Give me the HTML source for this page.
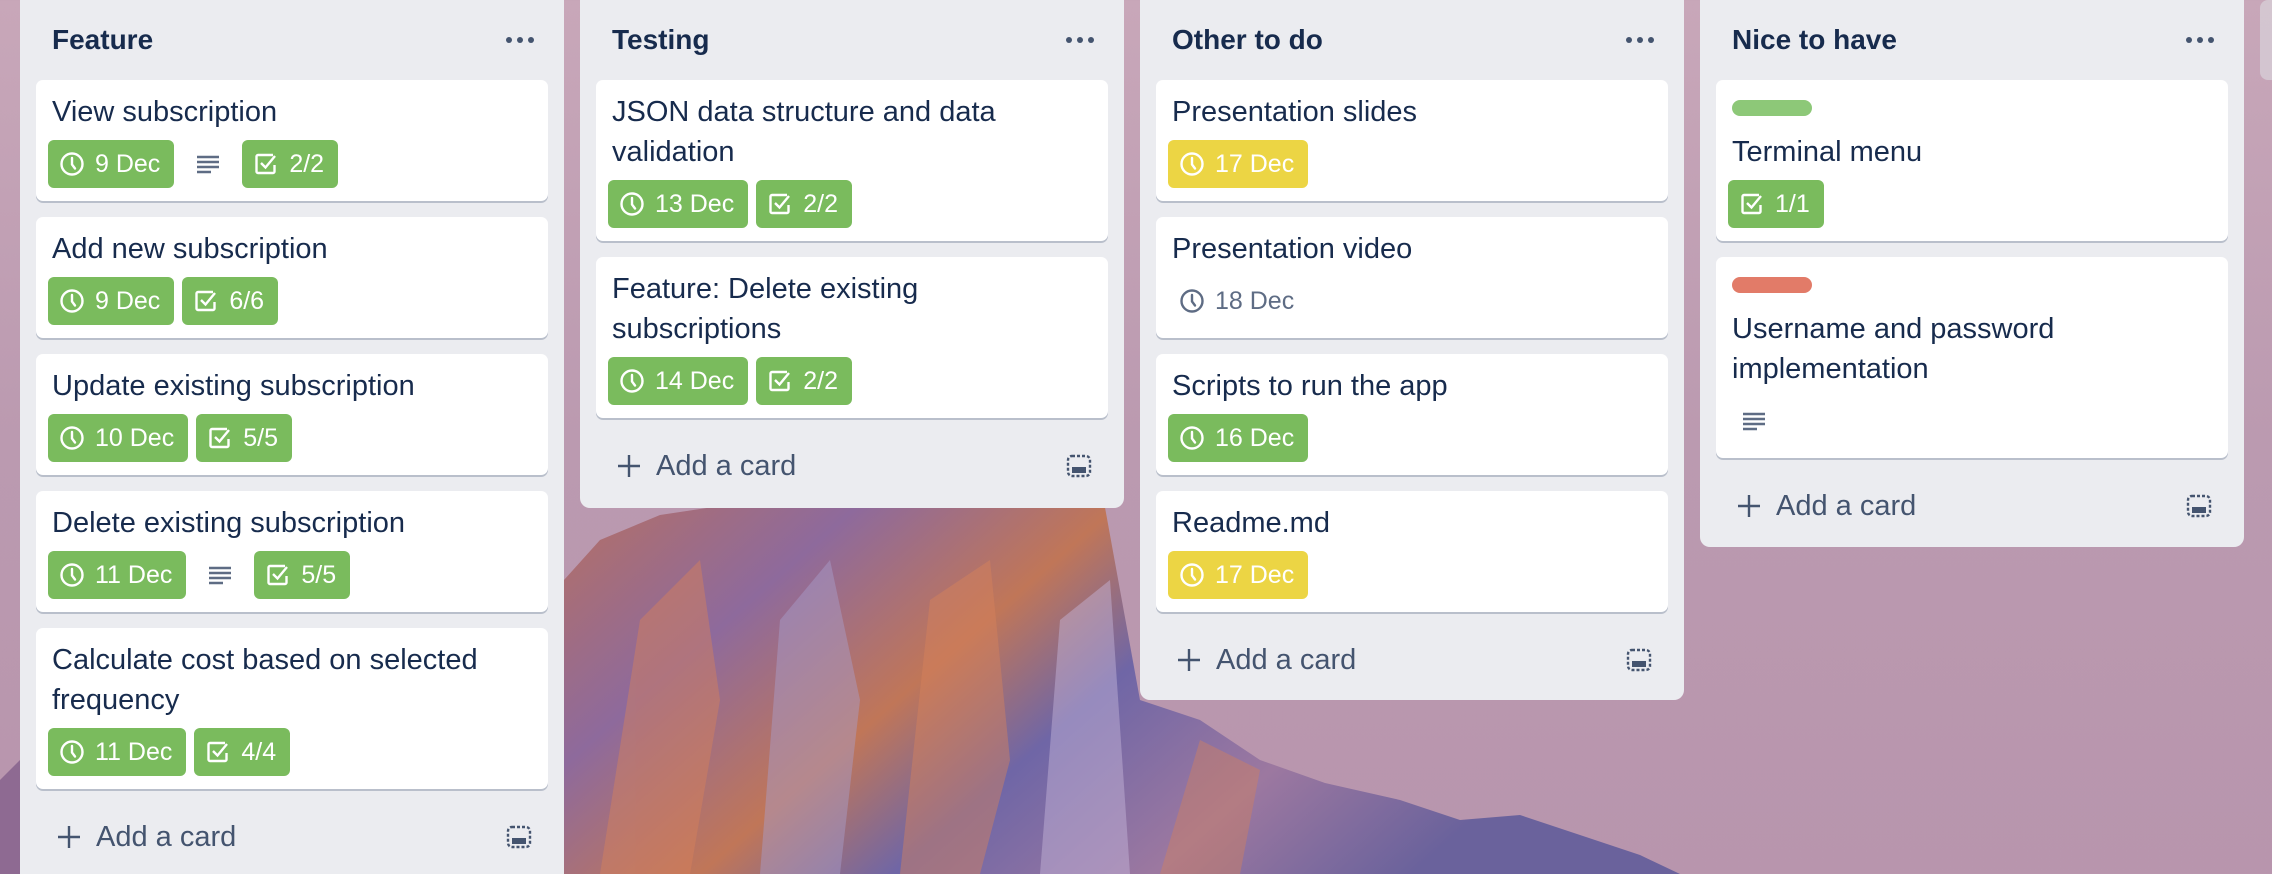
<!DOCTYPE html>
<html><head><meta charset="utf-8"><style>
*{box-sizing:border-box;margin:0;padding:0}
html,body{width:2272px;height:874px;overflow:hidden}
body{position:relative;font-family:"Liberation Sans",sans-serif;color:#172b4d;background:linear-gradient(180deg,#c8a7b9 0%,#bb9ab0 50%,#b895ad 100%)}
#bg{position:absolute;left:0;top:0}
.list{position:absolute;top:0;width:544px;background:#ebecf0;border-radius:0 0 10px 10px;padding:0 16px}
.hdr{height:80px;display:flex;align-items:center;justify-content:space-between;padding:0 30px 0 32px;margin:0 -16px}
.hdr h2{font-size:28px;font-weight:bold;line-height:40px}
.dots{display:flex;gap:5px}
.dots i{width:6px;height:6px;border-radius:50%;background:#44546f;display:block}
.card{background:#fff;border-radius:7px;box-shadow:0 2px 0 #b9bfcb;padding:12px 19px 13px 12px;margin-bottom:16px}
.t{font-size:29px;line-height:40px;padding-left:4px;white-space:nowrap}
.badges{display:flex;align-items:center;margin-top:8px;height:48px;gap:8px}
.b{height:48px;border-radius:6px;background:#7abb5d;color:#fff;display:flex;align-items:center;padding:0 14px 0 11px;font-size:25px;gap:10px}
.b.y{background:#ecd544}
.b.g{background:none;color:#5e6c84}
.desc{width:52px;height:48px;display:flex;align-items:center;justify-content:center}
.lab{width:80px;height:16px;border-radius:8px;margin:8px 0 16px 4px}
.add{height:64px;display:flex;align-items:center;justify-content:space-between;padding:0 16px 0 20px;color:#44546f;font-size:29px}
.add span{display:flex;align-items:center;gap:14px}
</style></head><body>
<svg id="bg" width="2272" height="874" viewBox="0 0 2272 874">
<defs>
<linearGradient id="m" x1="0" y1="0" x2="1" y2="0.4">
<stop offset="0" stop-color="#b87060"/><stop offset="0.25" stop-color="#8e6a9c"/><stop offset="0.45" stop-color="#c07658"/><stop offset="0.6" stop-color="#6f66a6"/><stop offset="0.8" stop-color="#9c78a0"/><stop offset="1" stop-color="#6a629c"/>
</linearGradient>
</defs>
<polygon points="564,874 564,580 600,540 660,515 760,500 860,490 980,480 1100,480 1140,700 1200,720 1260,760 1325,783 1400,800 1460,820 1520,815 1580,835 1640,855 1680,874" fill="url(#m)"/>
<g opacity="0.45">
<polygon points="600,874 640,620 700,560 720,700 690,874" fill="#d8825a"/>
<polygon points="760,874 780,620 830,560 860,700 840,874" fill="#a9a0cf"/>
<polygon points="900,874 930,600 990,560 1010,760 980,874" fill="#d8825a"/>
<polygon points="1040,874 1060,620 1110,580 1130,874" fill="#c8b8dc"/>
<polygon points="1160,874 1200,740 1260,770 1240,874" fill="#d08060"/>
</g>
<polygon points="0,780 20,760 20,874 0,874" fill="#8e6a92"/>
</svg>

<!-- List 1 -->
<div class="list" style="left:20px;height:900px">
<div class="hdr"><h2>Feature</h2><div class="dots"><i></i><i></i><i></i></div></div>
<div class="card"><div class="t">View subscription</div><div class="badges">
<div class="b"><svg width="26" height="26" viewBox="0 0 26 26"><circle cx="13" cy="13" r="10.5" fill="none" stroke="#fff" stroke-width="2.4"/><path d="M13 7v6.5l3 4" fill="none" stroke="#fff" stroke-width="2.4" stroke-linecap="round"/></svg>9 Dec</div>
<div class="desc"><svg width="24" height="20" viewBox="0 0 24 20"><path d="M1 3h22M1 8h22M1 13h22M1 18h14" stroke="#5e6c84" stroke-width="2.4"/></svg></div>
<div class="b"><svg width="26" height="26" viewBox="0 0 26 26"><path d="M20 4H5a1.5 1.5 0 0 0-1.5 1.5v15A1.5 1.5 0 0 0 5 22h15a1.5 1.5 0 0 0 1.5-1.5V14" fill="none" stroke="#fff" stroke-width="2.4"/><path d="M8 12l4.5 4.5L22 5" fill="none" stroke="#fff" stroke-width="2.4"/></svg>2/2</div>
</div></div>
<div class="card"><div class="t">Add new subscription</div><div class="badges">
<div class="b"><svg width="26" height="26" viewBox="0 0 26 26"><circle cx="13" cy="13" r="10.5" fill="none" stroke="#fff" stroke-width="2.4"/><path d="M13 7v6.5l3 4" fill="none" stroke="#fff" stroke-width="2.4" stroke-linecap="round"/></svg>9 Dec</div>
<div class="b"><svg width="26" height="26" viewBox="0 0 26 26"><path d="M20 4H5a1.5 1.5 0 0 0-1.5 1.5v15A1.5 1.5 0 0 0 5 22h15a1.5 1.5 0 0 0 1.5-1.5V14" fill="none" stroke="#fff" stroke-width="2.4"/><path d="M8 12l4.5 4.5L22 5" fill="none" stroke="#fff" stroke-width="2.4"/></svg>6/6</div>
</div></div>
<div class="card"><div class="t">Update existing subscription</div><div class="badges">
<div class="b"><svg width="26" height="26" viewBox="0 0 26 26"><circle cx="13" cy="13" r="10.5" fill="none" stroke="#fff" stroke-width="2.4"/><path d="M13 7v6.5l3 4" fill="none" stroke="#fff" stroke-width="2.4" stroke-linecap="round"/></svg>10 Dec</div>
<div class="b"><svg width="26" height="26" viewBox="0 0 26 26"><path d="M20 4H5a1.5 1.5 0 0 0-1.5 1.5v15A1.5 1.5 0 0 0 5 22h15a1.5 1.5 0 0 0 1.5-1.5V14" fill="none" stroke="#fff" stroke-width="2.4"/><path d="M8 12l4.5 4.5L22 5" fill="none" stroke="#fff" stroke-width="2.4"/></svg>5/5</div>
</div></div>
<div class="card"><div class="t">Delete existing subscription</div><div class="badges">
<div class="b"><svg width="26" height="26" viewBox="0 0 26 26"><circle cx="13" cy="13" r="10.5" fill="none" stroke="#fff" stroke-width="2.4"/><path d="M13 7v6.5l3 4" fill="none" stroke="#fff" stroke-width="2.4" stroke-linecap="round"/></svg>11 Dec</div>
<div class="desc"><svg width="24" height="20" viewBox="0 0 24 20"><path d="M1 3h22M1 8h22M1 13h22M1 18h14" stroke="#5e6c84" stroke-width="2.4"/></svg></div>
<div class="b"><svg width="26" height="26" viewBox="0 0 26 26"><path d="M20 4H5a1.5 1.5 0 0 0-1.5 1.5v15A1.5 1.5 0 0 0 5 22h15a1.5 1.5 0 0 0 1.5-1.5V14" fill="none" stroke="#fff" stroke-width="2.4"/><path d="M8 12l4.5 4.5L22 5" fill="none" stroke="#fff" stroke-width="2.4"/></svg>5/5</div>
</div></div>
<div class="card"><div class="t">Calculate cost based on selected<br>frequency</div><div class="badges">
<div class="b"><svg width="26" height="26" viewBox="0 0 26 26"><circle cx="13" cy="13" r="10.5" fill="none" stroke="#fff" stroke-width="2.4"/><path d="M13 7v6.5l3 4" fill="none" stroke="#fff" stroke-width="2.4" stroke-linecap="round"/></svg>11 Dec</div>
<div class="b"><svg width="26" height="26" viewBox="0 0 26 26"><path d="M20 4H5a1.5 1.5 0 0 0-1.5 1.5v15A1.5 1.5 0 0 0 5 22h15a1.5 1.5 0 0 0 1.5-1.5V14" fill="none" stroke="#fff" stroke-width="2.4"/><path d="M8 12l4.5 4.5L22 5" fill="none" stroke="#fff" stroke-width="2.4"/></svg>4/4</div>
</div></div>
<div class="add"><span><svg width="26" height="26" viewBox="0 0 26 26"><path d="M13 2v22M2 13h22" stroke="#44546f" stroke-width="2.4"/></svg>Add a card</span><svg width="26" height="26" viewBox="0 0 26 26"><rect x="2" y="3" width="22" height="20" rx="4" fill="none" stroke="#44546f" stroke-width="2.4" stroke-dasharray="3 2"/><rect x="6" y="14" width="14" height="6" fill="#44546f"/></svg></div>
</div>

<!-- List 2 -->
<div class="list" style="left:580px;height:508px">
<div class="hdr"><h2>Testing</h2><div class="dots"><i></i><i></i><i></i></div></div>
<div class="card"><div class="t">JSON data structure and data<br>validation</div><div class="badges">
<div class="b"><svg width="26" height="26" viewBox="0 0 26 26"><circle cx="13" cy="13" r="10.5" fill="none" stroke="#fff" stroke-width="2.4"/><path d="M13 7v6.5l3 4" fill="none" stroke="#fff" stroke-width="2.4" stroke-linecap="round"/></svg>13 Dec</div>
<div class="b"><svg width="26" height="26" viewBox="0 0 26 26"><path d="M20 4H5a1.5 1.5 0 0 0-1.5 1.5v15A1.5 1.5 0 0 0 5 22h15a1.5 1.5 0 0 0 1.5-1.5V14" fill="none" stroke="#fff" stroke-width="2.4"/><path d="M8 12l4.5 4.5L22 5" fill="none" stroke="#fff" stroke-width="2.4"/></svg>2/2</div>
</div></div>
<div class="card"><div class="t">Feature: Delete existing<br>subscriptions</div><div class="badges">
<div class="b"><svg width="26" height="26" viewBox="0 0 26 26"><circle cx="13" cy="13" r="10.5" fill="none" stroke="#fff" stroke-width="2.4"/><path d="M13 7v6.5l3 4" fill="none" stroke="#fff" stroke-width="2.4" stroke-linecap="round"/></svg>14 Dec</div>
<div class="b"><svg width="26" height="26" viewBox="0 0 26 26"><path d="M20 4H5a1.5 1.5 0 0 0-1.5 1.5v15A1.5 1.5 0 0 0 5 22h15a1.5 1.5 0 0 0 1.5-1.5V14" fill="none" stroke="#fff" stroke-width="2.4"/><path d="M8 12l4.5 4.5L22 5" fill="none" stroke="#fff" stroke-width="2.4"/></svg>2/2</div>
</div></div>
<div class="add"><span><svg width="26" height="26" viewBox="0 0 26 26"><path d="M13 2v22M2 13h22" stroke="#44546f" stroke-width="2.4"/></svg>Add a card</span><svg width="26" height="26" viewBox="0 0 26 26"><rect x="2" y="3" width="22" height="20" rx="4" fill="none" stroke="#44546f" stroke-width="2.4" stroke-dasharray="3 2"/><rect x="6" y="14" width="14" height="6" fill="#44546f"/></svg></div>
</div>

<!-- List 3 -->
<div class="list" style="left:1140px;height:700px">
<div class="hdr"><h2>Other to do</h2><div class="dots"><i></i><i></i><i></i></div></div>
<div class="card"><div class="t">Presentation slides</div><div class="badges">
<div class="b y"><svg width="26" height="26" viewBox="0 0 26 26"><circle cx="13" cy="13" r="10.5" fill="none" stroke="#fff" stroke-width="2.4"/><path d="M13 7v6.5l3 4" fill="none" stroke="#fff" stroke-width="2.4" stroke-linecap="round"/></svg>17 Dec</div>
</div></div>
<div class="card"><div class="t">Presentation video</div><div class="badges">
<div class="b g"><svg width="26" height="26" viewBox="0 0 26 26"><circle cx="13" cy="13" r="10.5" fill="none" stroke="#5e6c84" stroke-width="2.4"/><path d="M13 7v6.5l3 4" fill="none" stroke="#5e6c84" stroke-width="2.4" stroke-linecap="round"/></svg>18 Dec</div>
</div></div>
<div class="card"><div class="t">Scripts to run the app</div><div class="badges">
<div class="b"><svg width="26" height="26" viewBox="0 0 26 26"><circle cx="13" cy="13" r="10.5" fill="none" stroke="#fff" stroke-width="2.4"/><path d="M13 7v6.5l3 4" fill="none" stroke="#fff" stroke-width="2.4" stroke-linecap="round"/></svg>16 Dec</div>
</div></div>
<div class="card"><div class="t">Readme.md</div><div class="badges">
<div class="b y"><svg width="26" height="26" viewBox="0 0 26 26"><circle cx="13" cy="13" r="10.5" fill="none" stroke="#fff" stroke-width="2.4"/><path d="M13 7v6.5l3 4" fill="none" stroke="#fff" stroke-width="2.4" stroke-linecap="round"/></svg>17 Dec</div>
</div></div>
<div class="add"><span><svg width="26" height="26" viewBox="0 0 26 26"><path d="M13 2v22M2 13h22" stroke="#44546f" stroke-width="2.4"/></svg>Add a card</span><svg width="26" height="26" viewBox="0 0 26 26"><rect x="2" y="3" width="22" height="20" rx="4" fill="none" stroke="#44546f" stroke-width="2.4" stroke-dasharray="3 2"/><rect x="6" y="14" width="14" height="6" fill="#44546f"/></svg></div>
</div>

<!-- List 4 -->
<div class="list" style="left:1700px;height:547px">
<div class="hdr"><h2>Nice to have</h2><div class="dots"><i></i><i></i><i></i></div></div>
<div class="card"><div class="lab" style="background:#8dc878"></div><div class="t">Terminal menu</div><div class="badges">
<div class="b"><svg width="26" height="26" viewBox="0 0 26 26"><path d="M20 4H5a1.5 1.5 0 0 0-1.5 1.5v15A1.5 1.5 0 0 0 5 22h15a1.5 1.5 0 0 0 1.5-1.5V14" fill="none" stroke="#fff" stroke-width="2.4"/><path d="M8 12l4.5 4.5L22 5" fill="none" stroke="#fff" stroke-width="2.4"/></svg>1/1</div>
</div></div>
<div class="card"><div class="lab" style="background:#e27b68"></div><div class="t">Username and password<br>implementation</div><div class="badges">
<div class="desc"><svg width="24" height="20" viewBox="0 0 24 20"><path d="M1 3h22M1 8h22M1 13h22M1 18h14" stroke="#5e6c84" stroke-width="2.4"/></svg></div>
</div></div>
<div class="add"><span><svg width="26" height="26" viewBox="0 0 26 26"><path d="M13 2v22M2 13h22" stroke="#44546f" stroke-width="2.4"/></svg>Add a card</span><svg width="26" height="26" viewBox="0 0 26 26"><rect x="2" y="3" width="22" height="20" rx="4" fill="none" stroke="#44546f" stroke-width="2.4" stroke-dasharray="3 2"/><rect x="6" y="14" width="14" height="6" fill="#44546f"/></svg></div>
</div>

<div style="position:absolute;left:2260px;top:0;width:20px;height:80px;background:#d9d3da;border-radius:8px 0 0 8px;opacity:.7"></div>
</body></html>
